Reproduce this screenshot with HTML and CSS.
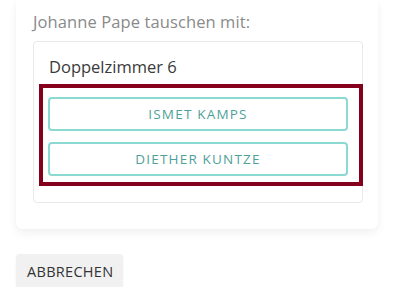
FILE: index.html
```html
<!DOCTYPE html>
<html lang="de">
<head>
  <meta charset="UTF-8" />
  <meta name="viewport" content="width=device-width, initial-scale=1.0"/>
  <title>Zimmer tauschen</title>
  <link rel="stylesheet" href="styles.css">
</head>
<body>
  <div class="page">
    <div class="swap-card">
      <p class="swap-label">Johanne Pape tauschen mit:</p>

      <div class="room-box">
        <h2 class="room-title">Doppelzimmer 6</h2>
        <div class="room-options">
          <button class="option-btn">Ismet Kamps</button>
          <button class="option-btn">Diether Kuntze</button>
        </div>
        <div class="highlight"></div>
      </div>
    </div>

    <button class="cancel-btn">Abbrechen</button>
  </div>
</body>
</html>
```

FILE: styles.css
```css
body {
  margin: 0;
  font-family: 'Open Sans', 'Noto Sans', sans-serif;
  background: #ffffff;
}

.page {
  padding: 0 0 0 16px;
}

.swap-card {
  width: 362px;
  box-sizing: border-box;
  padding: 12px 15px 26px 17px;
  background: #fff;
  border-radius: 0 0 6px 6px;
  box-shadow: 0 4px 10px rgba(0, 0, 0, 0.06), 0 0 2px rgba(0, 0, 0, 0.04);
}

.swap-label {
  margin: 0 0 9px;
  font-size: 16.5px;
  line-height: 20px;
  letter-spacing: 0.1px;
  color: #8a8a8a;
}

.room-box {
  position: relative;
  border: 1px solid #e9e9e9;
  border-radius: 4px;
  padding: 12px 14px 26px;
}

.room-title {
  margin: 0 0 17px 1px;
  font-size: 16.5px;
  font-weight: normal;
  line-height: 26px;
  color: #3a3a3a;
}

.room-options {
  display: flex;
  flex-direction: column;
  gap: 11px;
}

.option-btn {
  height: 34px;
  border: 2px solid #8ad9d3;
  border-radius: 4px;
  background: #fff;
  color: #4f9f99;
  font-family: inherit;
  font-size: 13.5px;
  letter-spacing: 1.2px;
  text-transform: uppercase;
}

.highlight {
  position: absolute;
  left: 5px;
  top: 42px;
  width: 324px;
  height: 102px;
  box-sizing: border-box;
  border: 4.5px solid #85001d;
}

.cancel-btn {
  margin-top: 25px;
  height: 34px;
  padding: 0 10px 0 11px;
  border: none;
  border-radius: 4px;
  background: #f1f1f1;
  box-shadow: 0 1px 2px rgba(0, 0, 0, 0.08);
  color: #333;
  font-family: inherit;
  font-size: 14.5px;
  letter-spacing: 0.3px;
  text-transform: uppercase;
}
```
